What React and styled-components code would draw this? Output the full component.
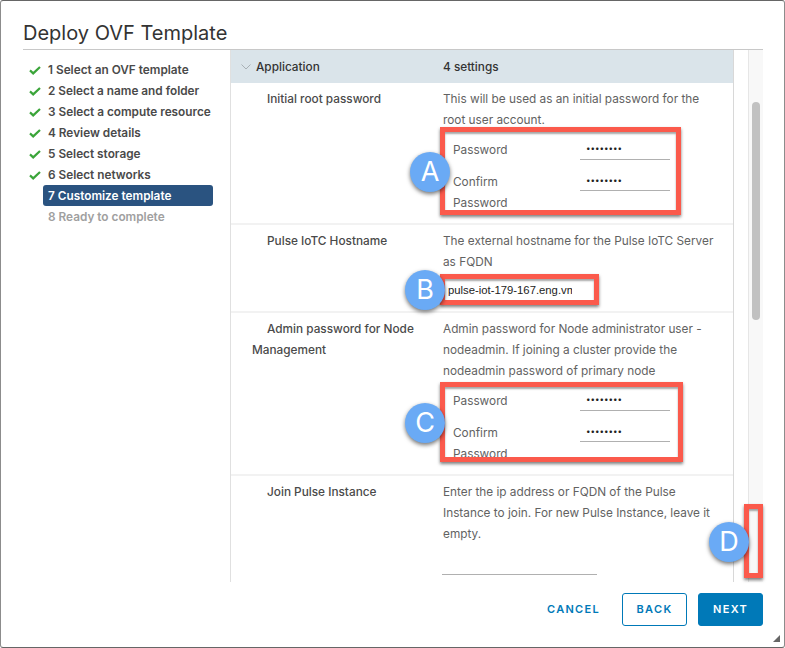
import React from 'react';
import styled, { createGlobalStyle } from 'styled-components';

const steps = [
  { label: '1 Select an OVF template', state: 'done' },
  { label: '2 Select a name and folder', state: 'done' },
  { label: '3 Select a compute resource', state: 'done' },
  { label: '4 Review details', state: 'done' },
  { label: '5 Select storage', state: 'done' },
  { label: '6 Select networks', state: 'done' },
  { label: '7 Customize template', state: 'active' },
  { label: '8 Ready to complete', state: 'todo' },
];

const PasswordPair = () => (
  <SubForm>
    <SubLabel>Password</SubLabel>
    <DotsField>••••••••</DotsField>
    <SubLabel>Confirm Password</SubLabel>
    <DotsField>••••••••</DotsField>
  </SubForm>
);

const App = () => {
  return (
    <Dialog>
      <GlobalStyle />
      <Title>Deploy OVF Template</Title>
      <Body>
        <Steps>
          {steps.map((step) => (
            <Step key={step.label} $state={step.state}>
              {step.state === 'done' && (
                <Check viewBox="0 0 12 9">
                  <path d="M1 4.4 L4.2 7.4 L11 1" />
                </Check>
              )}
              {step.label}
            </Step>
          ))}
        </Steps>
        <Panel>
          <PanelHead>
            <Chevron viewBox="0 0 10 6">
              <path d="M0.5 0.5 L5 5 L9.5 0.5" />
            </Chevron>
            <HeadName>Application</HeadName>
            <span>4 settings</span>
          </PanelHead>
          <Row $height={142}>
            <RowLabel>Initial root password</RowLabel>
            <RowValue>
              This will be used as an initial password for the root user account.
              <PasswordPair />
            </RowValue>
          </Row>
          <Row $height={88}>
            <RowLabel>Pulse IoTC Hostname</RowLabel>
            <RowValue>
              The external hostname for the Pulse IoTC Server as FQDN
              <HostField>pulse-iot-179-167.eng.vm</HostField>
            </RowValue>
          </Row>
          <Row $height={163}>
            <RowLabel>Admin password for Node Management</RowLabel>
            <RowValue>
              Admin password for Node administrator user - nodeadmin. If joining a cluster provide the
              nodeadmin password of primary node
              <PasswordPair />
            </RowValue>
          </Row>
          <Row $height={120}>
            <RowLabel>Join Pulse Instance</RowLabel>
            <RowValue>
              Enter the ip address or FQDN of the Pulse Instance to join. For new Pulse Instance, leave it empty.
              <EmptyField />
            </RowValue>
          </Row>
        </Panel>
        <Scrollbar>
          <Thumb />
        </Scrollbar>
      </Body>
      <Footer>
        <CancelButton>CANCEL</CancelButton>
        <BackButton>BACK</BackButton>
        <NextButton>NEXT</NextButton>
      </Footer>
      <Grip viewBox="0 0 8 8">
        <path d="M8 0 L8 7 L1 7 Z" />
      </Grip>

      <Callout $left={440} $top={127} $width={241} $height={88} />
      <Callout $left={440} $top={274} $width={159} $height={31} />
      <Callout $left={440} $top={382} $width={243} $height={80} />
      <Callout $left={744} $top={504} $width={19} $height={74} />
      <Badge $left={410} $top={152}>A</Badge>
      <Badge $left={405} $top={270}>B</Badge>
      <Badge $left={405} $top={403}>C</Badge>
      <Badge $left={709} $top={522}>D</Badge>
    </Dialog>
  );
};

export default App;

const GlobalStyle = createGlobalStyle`
  html, body {
    margin: 0;
    padding: 0;
    background: #fff;
  }
`;

const Dialog = styled.div`
  position: relative;
  box-sizing: border-box;
  width: 785px;
  height: 648px;
  overflow: hidden;
  display: flex;
  flex-direction: column;
  padding: 0 21px 0 22px;
  background: #fff;
  border: 1px solid #8c8c8c;
  border-top-color: #666;
  border-bottom-color: #666;
  border-radius: 3px;
  font-family: Inter, "Noto Sans", sans-serif;
  font-size: 11.8px;
  color: #565656;
`;

const Title = styled.h1`
  height: 49px;
  margin: 0;
  padding-top: 18px;
  box-sizing: border-box;
  border-bottom: 1px solid #c8c8c8;
  font-size: 20px;
  line-height: 29px;
  font-weight: 400;
  color: #333;
  flex-shrink: 0;
`;

const Body = styled.div`
  display: flex;
  height: 532px;
  flex-shrink: 0;
`;

const Steps = styled.div`
  width: 207px;
  padding-top: 9px;
  flex-shrink: 0;
`;

const Step = styled.div`
  position: relative;
  width: 170px;
  height: 21px;
  margin-left: 20px;
  padding-left: 5px;
  box-sizing: border-box;
  line-height: 22px;
  font-weight: 600;
  white-space: nowrap;
  border-radius: 3px;
  color: ${(p) => (p.$state === 'todo' ? '#a0a0a0' : p.$state === 'active' ? '#fff' : '#4a4a4a')};
  background: ${(p) => (p.$state === 'active' ? '#2a5380' : 'transparent')};
`;

const Check = styled.svg`
  position: absolute;
  left: -14px;
  top: 7px;
  width: 12px;
  height: 9px;

  path {
    fill: none;
    stroke: #3ba53a;
    stroke-width: 2.2;
  }
`;

const Panel = styled.div`
  width: 504px;
  box-sizing: border-box;
  border-left: 1px solid #e0e0e0;
  border-right: 1px solid #d8d8d8;
  overflow: hidden;
  flex-shrink: 0;
`;

const PanelHead = styled.div`
  display: flex;
  align-items: center;
  height: 33px;
  padding-left: 10px;
  background: #dae4ea;
  color: #333;
  font-weight: 500;
`;

const Chevron = styled.svg`
  width: 10px;
  height: 6px;
  margin-right: 5px;

  path {
    fill: none;
    stroke: #a8b0b5;
    stroke-width: 1;
  }
`;

const HeadName = styled.span`
  width: 187px;
`;

const Row = styled.div`
  display: grid;
  grid-template-columns: 191px 279px;
  box-sizing: border-box;
  height: ${(p) => p.$height}px;
  padding: 6px 0 0 21px;
  border-bottom: 2px solid #f2f2f2;
  line-height: 21px;
`;

const RowLabel = styled.div`
  padding-right: 8px;
  text-indent: 15px;
  font-weight: 500;
  color: #4a4a4a;
`;

const RowValue = styled.div`
  color: #626262;
`;

const SubForm = styled.div`
  display: grid;
  grid-template-columns: 127px 90px;
  row-gap: 10px;
  padding: 8px 0 0 10px;
`;

const SubLabel = styled.div`
  width: 60px;
  padding-top: 1px;
`;

const DotsField = styled.div`
  height: 21px;
  padding-left: 6px;
  box-sizing: border-box;
  border-bottom: 1px solid #b0b0b0;
  color: #222;
  font-size: 8px;
  line-height: 18px;

  &:last-child {
    height: 20px;
  }
`;

const HostField = styled.div`
  width: 124px;
  margin: 6px 0 0 5px;
  overflow: hidden;
  white-space: nowrap;
  font-family: "Liberation Sans", sans-serif;
  font-size: 11.3px;
  color: #222;
  line-height: 22px;
`;

const EmptyField = styled.div`
  width: 155px;
  height: 29px;
  margin-left: -1px;
  border-bottom: 1px solid #b0b0b0;
`;

const Scrollbar = styled.div`
  width: 15px;
  margin-left: 14px;
  padding-top: 52px;
  box-sizing: border-box;
  border-left: 1px solid #e6e6e6;
  background: #f8f8f8;
`;

const Thumb = styled.div`
  width: 8px;
  height: 218px;
  margin-left: 3px;
  border-radius: 4px;
  background: #c1c1c1;
`;

const Footer = styled.div`
  display: flex;
  justify-content: flex-end;
  align-items: flex-start;
  padding-top: 11px;
  gap: 11px;
`;

const ActionButton = styled.div`
  box-sizing: border-box;
  height: 33px;
  font-size: 11px;
  font-weight: 600;
  letter-spacing: 1.3px;
  line-height: 31px;
  text-align: center;
  border-radius: 3px;
  border: 1px solid #0079b8;
`;

const CancelButton = styled(ActionButton)`
  width: 75px;
  margin-right: 0;
  border-color: transparent;
  color: #0079b8;
`;

const BackButton = styled(ActionButton)`
  width: 65px;
  color: #0079b8;
`;

const NextButton = styled(ActionButton)`
  width: 65px;
  background: #0079b8;
  color: #fff;
`;

const Grip = styled.svg`
  position: absolute;
  right: 4px;
  bottom: 4px;
  width: 8px;
  height: 8px;

  path {
    fill: #666;
  }
`;

const Callout = styled.div`
  position: absolute;
  left: ${(p) => p.$left - 1}px;
  top: ${(p) => p.$top - 1}px;
  width: ${(p) => p.$width}px;
  height: ${(p) => p.$height}px;
  box-sizing: border-box;
  border: 5px solid #fb5a4c;
  box-shadow: 0 2px 3px rgba(0, 0, 0, 0.5), inset 0 2px 2px rgba(0, 0, 0, 0.35);
`;

const Badge = styled.div`
  position: absolute;
  left: ${(p) => p.$left - 1}px;
  top: ${(p) => p.$top - 1}px;
  width: 40px;
  height: 40px;
  border-radius: 50%;
  background: #6aaaf5;
  box-shadow: 0 2px 4px rgba(0, 0, 0, 0.55);
  color: #fff;
  font-size: 27px;
  font-weight: 400;
  line-height: 40px;
  text-align: center;
`;
